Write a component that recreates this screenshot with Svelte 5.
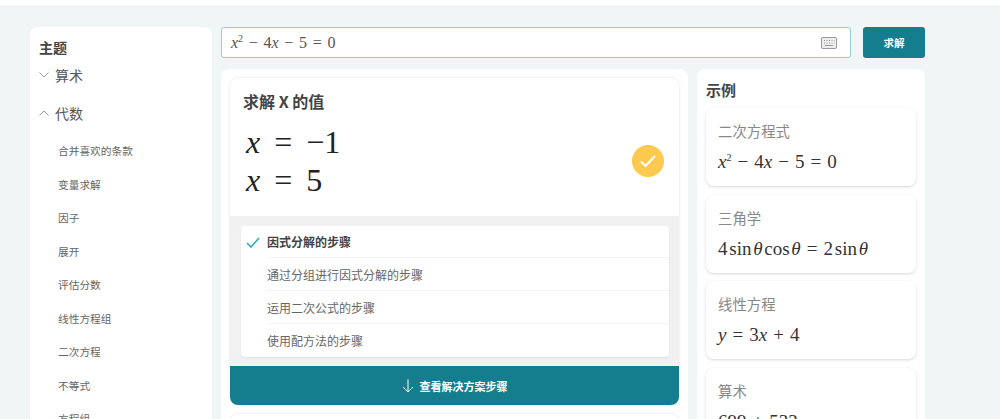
<script lang="ts">
	const topics = ['合并喜欢的条款', '变量求解', '因子', '展开', '评估分数', '线性方程组', '二次方程', '不等式', '方程组'];
	const methods = ['通过分组进行因式分解的步骤', '运用二次公式的步骤', '使用配方法的步骤'];
</script>

{#snippet quadratic()}
	<i>x</i><sup>2</sup> − 4<i>x</i> − 5 = 0
{/snippet}

<div class="page">
	<aside class="sidebar">
		<h2>主题</h2>
		<div class="group">
			<svg width="10" height="6" viewBox="0 0 10 6"><path d="M.5.5 5 5 9.500.5" /></svg>
			算术
		</div>
		<div class="group open">
			<svg width="10" height="6" viewBox="0 0 10 6"><path d="M.5 5.500 5 1l4.500 4.500" /></svg>
			代数
		</div>
		<ul>
			{#each topics as topic}
				<li>{topic}</li>
			{/each}
		</ul>
	</aside>

	<div class="content">
		<div class="search">
			<div class="input">
				<span class="math">{@render quadratic()}</span>
				<svg class="keyboard" width="16" height="12" viewBox="0 0 16 12">
					<rect x=".5" y=".5" width="15" height="11" rx="1.500" />
					<path d="M3 3.500h1M5.500 3.500h1M8 3.500h1M10.500 3.500h1M13 3.500h.5M3 6h1M5.500 6h1M8 6h1M10.500 6h1M13 6h.5M4 8.500h8" />
				</svg>
			</div>
			<button class="solve">求解</button>
		</div>

		<div class="columns">
			<main class="panel">
				<section class="result">
					<div class="answer">
						<h2>求解 X 的值</h2>
						<div class="roots">
							<div class="lines">
								<div><i>x</i> = −1</div>
								<div><i>x</i> = 5</div>
							</div>
							<span class="badge">
								<svg width="18" height="14" viewBox="0 0 18 14"><path d="M2 7.500 6.500 12 16 2" /></svg>
							</span>
						</div>
					</div>
					<div class="steps">
						<ul>
							<li class="active">
								<svg width="14" height="11" viewBox="0 0 14 11"><path d="M1 6l4 4 8-9" /></svg>
								<span>因式分解的步骤</span>
							</li>
							{#each methods as method}
								<li><span>{method}</span></li>
							{/each}
						</ul>
					</div>
					<button class="view">
						<svg width="12" height="14" viewBox="0 0 12 14"><path d="M6 .5v12.500M1 8l5 5 5-5" /></svg>
						查看解决方案步骤
					</button>
				</section>
				<section class="next"></section>
			</main>

			<aside class="panel examples">
				<h2>示例</h2>
				<div class="example">
					<p>二次方程式</p>
					<div class="math">{@render quadratic()}</div>
				</div>
				<div class="example">
					<p>三角学</p>
					<div class="math"><span class="tight">4 sin <i>θ</i> cos <i>θ</i></span> = <span class="tight">2 sin <i>θ</i></span></div>
				</div>
				<div class="example">
					<p>线性方程</p>
					<div class="math"><i>y</i> = 3<i>x</i> + 4</div>
				</div>
				<div class="example">
					<p>算术</p>
					<div class="math">699 + 533</div>
				</div>
			</aside>
		</div>
	</div>
</div>

<style>
	:global(body) {
		margin: 0;
		background: #fff;
		overflow: hidden;
		font-family: 'Noto Sans CJK SC', 'Liberation Sans', sans-serif;
		color: #444;
	}

	svg {
		fill: none;
		stroke: currentColor;
		flex: none;
	}

	h2 {
		margin: 0;
		font-size: 14px;
		line-height: 20px;
		font-weight: 700;
		color: #444;
	}

	ul {
		list-style: none;
		margin: 0;
		padding: 0;
	}

	button {
		font: inherit;
		border: 0;
		color: #fff;
		background: #147e8f;
	}

	.page {
		height: 414px;
		margin-top: 5px;
		padding: 22px 75px 0 30px;
		box-sizing: border-box;
		background: #f0f6f6;
		display: flex;
		gap: 9px;
		overflow: hidden;
	}

	.sidebar {
		width: 182px;
		flex: none;
		height: 500px;
		box-sizing: border-box;
		background: #fff;
		border-radius: 8px;
		padding: 10px 9px;
	}

	.group {
		display: flex;
		align-items: center;
		gap: 6px;
		height: 24px;
		margin-top: 6px;
		font-size: 14px;
		color: #555;
	}

	.group svg {
		stroke: #999;
	}

	.group.open {
		margin-top: 14px;
	}

	.sidebar ul {
		margin-top: 15px;
		padding-left: 19px;
	}

	.sidebar li {
		height: 33.500px;
		line-height: 22px;
		font-size: 10.700px;
		color: #666;
	}

	.content {
		flex: 1;
		min-width: 0;
	}

	.search {
		display: flex;
		gap: 12px;
		height: 31px;
	}

	.input {
		flex: 1;
		box-sizing: border-box;
		display: flex;
		align-items: center;
		justify-content: space-between;
		padding: 0 13px 0 9px;
		background: #fff;
		border: 1px solid #8fd0da;
		border-radius: 3px;
	}

	.keyboard {
		stroke: #999;
		background: #eee;
	}

	.solve {
		width: 62px;
		border-radius: 3px;
		font-size: 10.500px;
		font-weight: 700;
	}

	.math {
		font-family: 'Liberation Serif', serif;
		font-size: 16px;
		word-spacing: 1.700px;
		color: #555;
	}

	.math sup {
		font-size: 10px;
		line-height: 0;
	}

	.columns {
		display: flex;
		gap: 9px;
		margin-top: 11px;
	}

	.panel {
		background: #fff;
		border-radius: 8px;
		padding: 9px;
		box-sizing: border-box;
	}

	main.panel {
		width: 467px;
		flex: none;
	}

	.examples {
		flex: 1;
		min-width: 0;
		padding-top: 10px;
	}

	.examples h2 {
		font-size: 15px;
		line-height: 21px;
	}

	.result {
		border-radius: 8px;
		box-shadow: 0 0 3px rgba(0, 0, 0, 0.12);
	}

	.answer {
		height: 138px;
		box-sizing: border-box;
		padding: 13px 15px 0 13px;
	}

	.answer h2 {
		font-size: 16px;
	}

	.roots {
		display: flex;
		align-items: center;
		justify-content: space-between;
		margin-top: 12px;
	}

	.lines {
		padding-left: 3px;
		font-family: 'Liberation Serif', serif;
		font-size: 32px;
		line-height: 38px;
		word-spacing: 6px;
		color: #222;
	}

	.badge {
		width: 32px;
		height: 32px;
		border-radius: 50%;
		background: #fdc94e;
		color: #fff;
		display: flex;
		align-items: center;
		justify-content: center;
	}

	.badge svg {
		stroke-width: 2;
	}

	.steps {
		background: #f1f1f1;
		padding: 10px 10px 10px 11px;
		height: 150px;
		box-sizing: border-box;
	}

	.steps ul {
		background: #fff;
		border-radius: 4px;
		box-shadow: 0 1px 2px rgba(0, 0, 0, 0.08);
		font-size: 12px;
		color: #666;
	}

	.steps li {
		height: 33px;
		padding-left: 26px;
		position: relative;
		display: flex;
		align-items: center;
	}

	.steps span {
		flex: 1;
	}

	.steps li + li span {
		align-self: stretch;
		line-height: 33px;
		border-top: 1px solid #f3f3f3;
		margin-top: -1px;
	}

	.steps .active {
		height: 32px;
		padding-bottom: 2px;
		box-sizing: border-box;
		font-weight: 700;
		color: #444;
	}

	.steps .active svg {
		position: absolute;
		left: 5px;
		top: 11px;
		stroke: #2aa7ba;
		stroke-width: 1.500;
	}

	.view {
		width: 100%;
		height: 39px;
		display: flex;
		align-items: center;
		justify-content: center;
		gap: 6px;
		padding-left: 6px;
		border-radius: 0 0 8px 8px;
		font-size: 11px;
		font-weight: 700;
	}

	.next {
		height: 60px;
		margin-top: 9px;
		border-radius: 8px;
		box-shadow: 0 0 3px rgba(0, 0, 0, 0.12);
	}

	.example {
		height: 78px;
		box-sizing: border-box;
		margin-top: 8.500px;
		padding: 12px 12px 0;
		border-radius: 8px;
		box-shadow: 0 1px 3px rgba(0, 0, 0, 0.16);
	}

	.examples h2 + .example {
		margin-top: 8px;
	}

	.example p {
		margin: 0;
		font-size: 14.400px;
		line-height: 22px;
		color: #888;
	}

	.example .math {
		margin-top: 9px;
		font-size: 19px;
		line-height: 22px;
		word-spacing: 1.300px;
		color: #333;
	}

	.tight {
		word-spacing: -3px;
	}
</style>
